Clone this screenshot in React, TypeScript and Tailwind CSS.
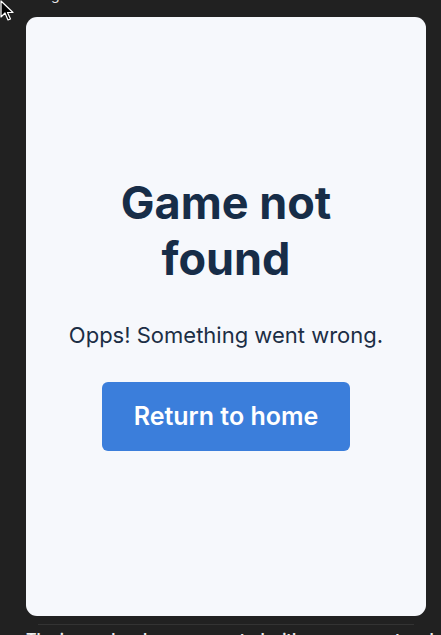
import React from "react";

export default function App() {
  return (
    <div
      className="w-[441px] h-[635px] overflow-hidden bg-[#212121] relative"
      style={{ fontFamily: "Inter, 'Noto Sans', sans-serif" }}
    >
      <div className="h-[17px] relative">
        <div className="absolute left-[27px] top-[-14px] text-[14px] leading-[17px] text-[#e6e6e6]">
          Image created
        </div>
      </div>
      <div className="ml-[26px] w-[400px] h-[599px] rounded-[11px] bg-[#f6f8fc] flex flex-col items-center justify-center pb-[7px]">
        <h1 className="text-[45px] leading-[56px] font-bold text-[#172d48] text-center w-[300px]">
          Game not found
        </h1>
        <p className="mt-[34px] text-[22px] leading-[28px] text-[#1c2e45]">
          Opps! Something went wrong.
        </p>
        <button className="mt-[33px] w-[248px] h-[69px] rounded-[6px] bg-[#3b7edb] text-white text-[25px] font-semibold">
          Return to home
        </button>
      </div>
      <div className="mt-[8px] mx-[38px] w-[376px] h-px bg-[#333333]" />
      <div className="ml-[26px] mt-[4px] text-[16px] leading-[20px] text-[#ececec] font-semibold whitespace-nowrap">
        The image has been generated with your prompt and settings
      </div>
      <svg
        className="absolute left-0 top-0"
        width="14"
        height="22"
        viewBox="0 0 14 22"
      >
        <path
          d="M1 1 L1 17 L5 13 L8 20 L10.5 19 L7.5 12.5 L13 12.5 Z"
          fill="#000"
          stroke="#fff"
          strokeWidth="1.2"
          strokeLinejoin="round"
        />
      </svg>
    </div>
  );
}
